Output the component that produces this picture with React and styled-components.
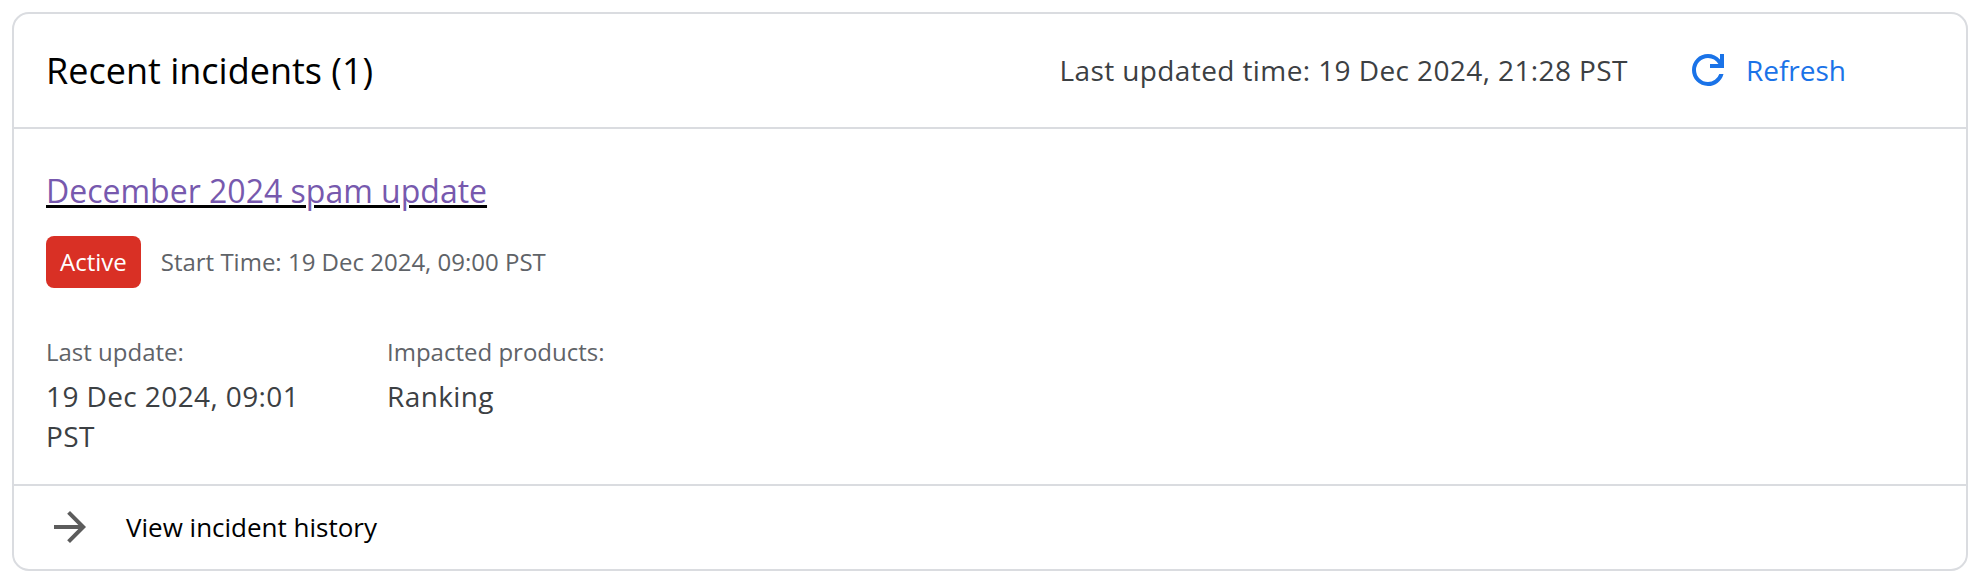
import React from 'react'
import styled, { createGlobalStyle } from 'styled-components'

const GlobalStyle = createGlobalStyle`
  * {
    box-sizing: border-box;
  }
  body {
    margin: 0;
    background: #fff;
    font-family: 'Open Sans', 'Noto Sans', sans-serif;
  }
`

const Card = styled.section`
  width: 1956px;
  height: 559px;
  margin: 12px 0 0 12px;
  border: 2px solid #dadce0;
  border-radius: 17px;
`

const Header = styled.header`
  display: flex;
  align-items: center;
  height: 115px;
  padding: 0 120px 0 32px;
  border-bottom: 2px solid #dadce0;
`

const Title = styled.h2`
  margin: 0;
  font-size: 36px;
  font-weight: 400;
  color: #000;
`

const Updated = styled.span`
  margin-left: auto;
  padding-bottom: 2px;
  font-size: 28px;
  letter-spacing: 0.4px;
  color: #3c4043;
`

const Refresh = styled.button`
  display: flex;
  align-items: center;
  gap: 14px;
  margin-left: 56px;
  padding: 0 0 1px;
  border: 0;
  background: none;
  font: inherit;
  font-size: 28px;
  line-height: 46px;
  color: #1a73e8;
`

const RefreshLabel = styled.span`
  padding-bottom: 1px;
`

const Icon = styled.svg`
  flex: none;
  width: 48px;
  height: 48px;
  fill: currentColor;
`

const Incident = styled.div`
  height: 355px;
  padding: 39px 32px 0;
`

const IncidentTitle = styled.h3`
  margin: 0;
  font-size: 32px;
  font-weight: 400;
  line-height: 46px;
  text-decoration: underline;
  text-decoration-color: #000;
  text-decoration-thickness: 3px;
  text-underline-offset: 2px;
`

const IncidentLink = styled.a`
  color: #7759ae;
`

const Status = styled.div`
  display: flex;
  align-items: center;
  gap: 20px;
  margin-top: 22px;
`

const Badge = styled.span`
  height: 52px;
  padding: 0 14px;
  border-radius: 8px;
  background: #d93025;
  font-size: 24px;
  line-height: 52px;
  color: #fff;
`

const StartTime = styled.span`
  padding-bottom: 2px;
  font-size: 24px;
  color: #5f6368;
`

const Details = styled.dl`
  display: grid;
  grid-template-columns: 261px 261px;
  column-gap: 80px;
  margin: 44px 0 0;
`

const Label = styled.dt`
  font-size: 24px;
  line-height: 40px;
  color: #5f6368;
`

const Value = styled.dd`
  margin: 4px 0 0;
  font-size: 28px;
  line-height: 40px;
  letter-spacing: 0.4px;
  color: #3c4043;
`

const Footer = styled.footer`
  display: flex;
  align-items: center;
  gap: 32px;
  height: 85px;
  padding: 0 32px 1px;
  border-top: 2px solid #dadce0;
`

const HistoryLink = styled.a`
  padding-bottom: 1px;
  font-size: 26px;
  color: #000;
`

const ArrowIcon = styled(Icon)`
  color: #5c5c5c;
`

const details = [
  { label: 'Last update:', value: '19 Dec 2024, 09:01 PST' },
  { label: 'Impacted products:', value: 'Ranking' },
]

const App = () => (
  <>
    <GlobalStyle />
    <Card>
      <Header>
        <Title>Recent incidents (1)</Title>
        <Updated>Last updated time: 19 Dec 2024, 21:28 PST</Updated>
        <Refresh>
          <Icon viewBox='0 0 24 24'>
            <path d='M12 20q-3.35 0-5.675-2.325T4 12q0-3.35 2.325-5.675T12 4q1.725 0 3.3.713T18 6.75V4h2v7h-7V9h4.2q-.8-1.4-2.187-2.2T12 6Q9.5 6 7.75 7.75T6 12t1.75 4.25T12 18q1.925 0 3.475-1.1T17.65 14h2.1q-.7 2.65-2.85 4.325T12 20z' />
          </Icon>
          <RefreshLabel>Refresh</RefreshLabel>
        </Refresh>
      </Header>
      <Incident>
        <IncidentTitle>
          <IncidentLink>December 2024 spam update</IncidentLink>
        </IncidentTitle>
        <Status>
          <Badge>Active</Badge>
          <StartTime>Start Time: 19 Dec 2024, 09:00 PST</StartTime>
        </Status>
        <Details>
          {details.map(({ label, value }) => (
            <div key={label}>
              <Label>{label}</Label>
              <Value>{value}</Value>
            </div>
          ))}
        </Details>
      </Incident>
      <Footer>
        <ArrowIcon viewBox='0 0 24 24'>
          <path d='M12 4l-1.41 1.41L16.17 11H4v2h12.17l-5.58 5.59L12 20l8-8z' />
        </ArrowIcon>
        <HistoryLink>View incident history</HistoryLink>
      </Footer>
    </Card>
  </>
)

export default App
